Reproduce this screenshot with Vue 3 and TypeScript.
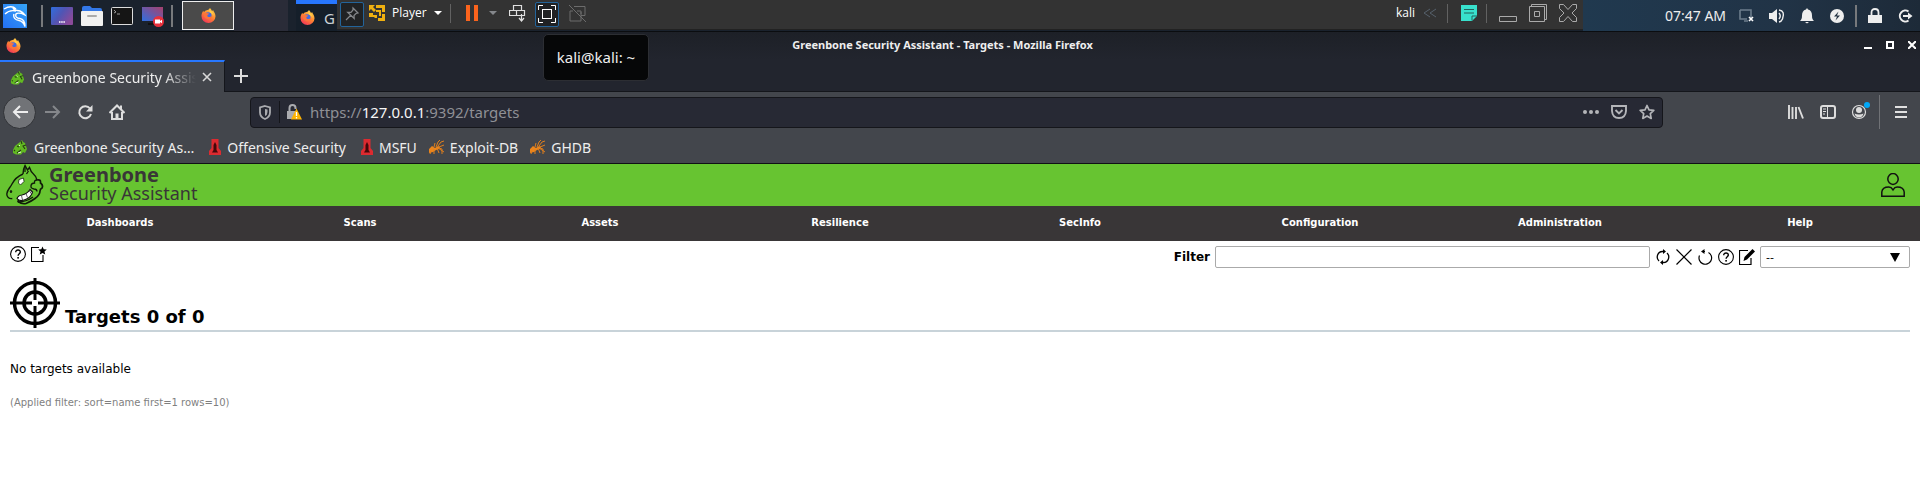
<script setup lang="ts">
import { ref } from 'vue'

const menus = ['Dashboards', 'Scans', 'Assets', 'Resilience', 'SecInfo', 'Configuration', 'Administration', 'Help']
const bookmarks = [
  { label: 'Greenbone Security As…', icon: 'dragon' },
  { label: 'Offensive Security', icon: 'rocket' },
  { label: 'MSFU', icon: 'rocket' },
  { label: 'Exploit-DB', icon: 'ant' },
  { label: 'GHDB', icon: 'ant' },
]
const filter = ref('')
</script>

<template>
  <div class="desktop">
    <svg class="defs" width="0" height="0" aria-hidden="true">
      <defs>
        <linearGradient id="wall" x1="0" y1="0" x2="1" y2="0.6"><stop offset="0" stop-color="#2f6fe0" /><stop offset=".5" stop-color="#5055b4" /><stop offset="1" stop-color="#8a4a9a" /></linearGradient>
        <linearGradient id="wall2" x1="0" y1="1" x2="1" y2="0"><stop offset="0" stop-color="#2f6fe0" /><stop offset="1" stop-color="#a8406c" /></linearGradient>
        <linearGradient id="flame" x1=".8" y1="0" x2=".2" y2="1"><stop offset="0" stop-color="#ffd84a" /><stop offset=".5" stop-color="#ff8430" /><stop offset="1" stop-color="#f0305c" /></linearGradient>
        <linearGradient id="kali" x1="0" y1="1" x2="1" y2="0"><stop offset="0" stop-color="#2470f4" /><stop offset="1" stop-color="#35a4f6" /></linearGradient>
      </defs>
      <symbol id="firefox" viewBox="0 0 16 16">
        <path d="M8 1.800C9 .8 9.300 .5 9.500 0c1.200 1 1.700 2 2 3 1-.1 1.400-1 1.400-1 .3 1.500 2.600 3.300 2.600 6.700A7.500 7.300 0 0 1 .5 8.600C.5 6 1.500 4 2.500 2.800l.6 1.600C4 3.300 5 2.700 6 2.500z" fill="url(#flame)" />
        <circle cx="7.700" cy="8" r="3.500" fill="#416be0" />
        <path d="M3.200 5.300c2-.6 3 .2 4 .2 1.400 0 1.600.8 1 1.200-1.700.7-1.900 1.700-.9 2.500 1.500 1 3 .2 4-1 .2 3-2.300 4.100-4.300 3.700C3.700 11.300 2.600 8 3.200 5.300z" fill="#fb743c" />
        <path d="M9 2c2.500 1.200 4.500 3 4.300 6.400C12.500 6 10.500 5.500 9.800 4.800 9 4 8.800 3 9 2z" fill="#ffcf48" />
      </symbol>
      <symbol id="dragon" viewBox="0 0 16 16">
        <path d="M8 3l2-2 1 2 2 1 1 3 1 3-2 4-2-1-2 2.500H4L1 14v-3l2-4z" fill="#62b922" />
        <path d="M9 2l1 3M14 6l-3 1 2 3M5 7l2 1M5 14l4-3M2 11l1 1" stroke="#263d13" stroke-width="1.100" fill="none" />
        <path d="M7 6l1 1M6 14l3-1" stroke="#e8f4df" stroke-width="1" />
      </symbol>
      <symbol id="rocket" viewBox="0 0 12 16">
        <path d="M2.500 0h7v9l2.500 3v4H0v-4l2.500-3z" fill="#dd2a30" /><path d="M6 3l1.500 3v5L9 13.500H3L4.500 11V6z" fill="#43080b" />
      </symbol>
      <symbol id="ant" viewBox="0 0 16 16">
        <path d="M0 10l3-3 3 2 3-2 2 1-1 2-3 1-3 2-4 1z" fill="#ec851c" />
        <path d="M2 12L1 15M5 10v5M8 9l2 5M9 9l6 4M5 8l1-4M7 8l2-5 2-2M9 7l3-4 3-1M10 8l5-2M10 9l3 1v5" stroke="#e07e1c" stroke-width="1" fill="none" />
      </symbol>
      <symbol id="help" viewBox="0 0 16 16">
        <circle cx="8" cy="8" r="7.400" fill="none" stroke="currentColor" stroke-width="1.100" /><path d="M5.700 6.300c0-3.200 4.800-2.900 4.600-.2-.1 1.700-2.200 1.700-2.200 3.700" fill="none" stroke="currentColor" stroke-width="1.400" /><rect x="7.300" y="11" width="1.600" height="1.600" fill="currentColor" />
      </symbol>
    </svg>

    <header class="panel">
      <div class="launchers">
        <button class="ic kali" aria-label="Applications">
          <svg width="24" height="24" viewBox="0 0 24 24"><rect width="24" height="24" fill="url(#kali)" /><path d="M1 5c5-3 9-3 12 0M2 10c3-3 7-4 11-3M10 4c1 3 4 2 7 3 2 1 4 2 5 4l-3-1.500c-3-.5-5-1-6 .5-1 3 1 4 4 4.500 3 .5 5 3 5 8-1-3-3-5.500-6-6-4-.6-6-3-5-6.500" fill="none" stroke="#fff" stroke-width="1.400" /></svg>
        </button>
        <i class="bar"></i>
        <button class="ic" aria-label="Show desktop"><svg width="22" height="22" viewBox="0 0 22 22"><rect y="2" width="22" height="18" rx="1" fill="url(#wall)" /><path d="M8 17h6" stroke="#fff" stroke-width="1.500" stroke-dasharray="1.500 .7" /></svg></button>
        <button class="ic" aria-label="Files"><svg width="22" height="22" viewBox="0 0 22 22"><path d="M1 9V3q0-2 2-2h6l2 2h8q2 0 2 2v4z" fill="#3378e8" /><rect y="6" width="22" height="15" rx="1" fill="#f1f1f1" /><path d="M7 11h8" stroke="#aaa" stroke-width="2" stroke-linecap="round" /></svg></button>
        <button class="ic" aria-label="Terminal"><svg width="22" height="22" viewBox="0 0 22 22"><rect x=".5" y="2.500" width="21" height="17" rx="1" fill="#151515" stroke="#ddd" /><path d="M3 5l2 2-2 1M6 9h3" fill="none" stroke="#999" /></svg></button>
        <button class="ic" aria-label="Recorder"><svg width="24" height="22" viewBox="0 0 24 22"><rect x="1" y="2" width="21" height="14" fill="url(#wall2)" /><path d="M7 19h7" stroke="#111" stroke-width="2" /><circle cx="17.500" cy="16.500" r="5.500" fill="#e8303c" /><path d="M14 14.500h5v4h-5zM19 16l2-1.300v3.600l-2-1.300z" fill="#fff" /></svg></button>
        <i class="bar"></i>
      </div>
      <button class="task" aria-label="Firefox window"><svg width="15" height="15"><use href="#firefox" /></svg></button>
      <div class="task-rest"></div>
      <button class="window-button"><svg width="15" height="15"><use href="#firefox" /></svg><span>G</span></button>

      <div class="vm">
        <button class="boxed" aria-label="Pin"><svg width="16" height="16" viewBox="0 0 16 16"><path d="M9 2l5 5-2 .5-2 2 .2 3-6.500-6.200 3.300 0L9 4zM7 9l-5 5" fill="none" stroke="#85888c" stroke-width="1.200" /></svg></button>
        <button class="player">
          <svg width="16" height="16" viewBox="0 0 16 16"><path d="M0 0h6L4 2l3 3-2 2-3-3-2 2zM7 0h9v7h-3V3H7zM0 8l4 0v2h4v3l-2 0-1-1H0zM9 13h4V9h3v7H9z" fill="#f0b010" /><path d="M7 6h4v5" stroke="#f0b010" stroke-width="2" fill="none" /></svg>
          <span>Player</span>
          <svg width="8" height="4" viewBox="0 0 8 4"><path d="M0 0h8L4 4z" fill="#fff" /></svg>
        </button>
        <i class="thin"></i>
        <button class="ic pause" aria-label="Pause"><svg width="12" height="16" viewBox="0 0 12 16"><path d="M0 0h4v16H0zM8 0h4v16H8z" fill="#fb641d" /></svg></button>
        <button class="ic more" aria-label="Power options"><svg width="8" height="4" viewBox="0 0 8 4"><path d="M0 0h8L4 4z" fill="#85888c" /></svg></button>
        <button class="ic keys" aria-label="Send keys"><svg width="17" height="17" viewBox="0 0 17 17"><path d="M4.500.5h8v5h-8zM.5 5.500h7v5h-7zM7.500 5.500h8v5h-8zM12.500 9v7M10 13l2.500 3 2.500-3" fill="none" stroke="#e0e0e0" stroke-width="1.200" /></svg></button>
        <button class="boxed" aria-label="Full screen"><svg width="18" height="18" viewBox="0 0 18 18"><path d="M.5 5V.5H5M13 .5h4.500V5M17.500 13v4.500H13M5 17.500H.5V13" fill="none" stroke="#fff" /><rect x="4.500" y="4.500" width="9" height="9" fill="none" stroke="#fff" /></svg></button>
        <button class="ic unity" aria-label="Unity"><svg width="17" height="17" viewBox="0 0 17 17"><path d="M5 1.500h11v9h-4M12 7v9H1V6h3M0 0l17 17M8 6h4v3" fill="none" stroke="#6c6c6c" /></svg></button>
        <div class="vm-end">
          <span>kali</span>
          <svg class="chev" width="14" height="10" viewBox="0 0 14 10"><path d="M7 1L1 5l6 4M13 1L7 5l6 4" fill="none" stroke="#56616c" /></svg>
          <i class="thin"></i>
          <button class="ic note" aria-label="Messages"><svg width="16" height="16" viewBox="0 0 16 16"><path d="M0 0h16v11l-5 5H0z" fill="#38e0cc" /><path d="M3 4.500h10M3 8h10M11 15.500V11h5" fill="none" stroke="#22605b" /></svg></button>
          <i class="thin"></i>
          <button class="ic wmin" aria-label="Minimize"><svg width="18" height="18" viewBox="0 0 18 18"><path d="M.5 12.500h17v5H.5z" fill="none" stroke="#aaa" /></svg></button>
          <button class="ic wmax" aria-label="Restore"><svg width="18" height="18" viewBox="0 0 18 18"><path d="M.5 2.500h15v15H.5zM2.500 2V.5h15v15H16M5.500 7.500h5v5h-5z" fill="none" stroke="#aaa" /></svg></button>
          <button class="ic wclose" aria-label="Close"><svg width="18" height="18" viewBox="0 0 18 18"><path d="M.5.5h4L9 5.500 13.500.500h4v4L13 9l4.500 4.500v4h-4L9 12.500l-4.500 5h-4v-4L5 9 .5 4.500z" fill="none" stroke="#aaa" /></svg></button>
        </div>
      </div>

      <div class="tray">
        <time>07:47 AM</time>
        <button class="ic t1" aria-label="Network"><svg width="15" height="15" viewBox="0 0 15 15"><path d="M1 2h11v8M1 2v9h7M5 13h4" fill="none" stroke="#6d7e8d" stroke-width="1.600" /><path d="M10 9l4 4M14 9l-4 4" stroke="#fff" stroke-width="1.600" /></svg></button>
        <button class="ic t2" aria-label="Volume"><svg width="16" height="16" viewBox="0 0 16 16"><path d="M0 5h3l5-4v14l-5-4H0z" fill="#eee" /><path d="M10 5q2.500 3 0 6M10 2q6.500 1 3.500 9-1 2.500-3.500 3" fill="none" stroke="#eee" stroke-width="1.400" /></svg></button>
        <button class="ic t3" aria-label="Notifications"><svg width="14" height="16" viewBox="0 0 14 16"><path d="M7 0l1 1.500c3 .7 4 3 4 6 0 3 .5 4 2 5.500H0c1.500-1.500 2-2.500 2-5.500 0-3 1-5.300 4-6zM5 14h4l-2 1.500z" fill="#eee" /></svg></button>
        <button class="ic t4" aria-label="Power"><svg width="14" height="14" viewBox="0 0 14 14"><circle cx="7" cy="7" r="7" fill="#eee" /><path d="M8.500 2.500L4 7.500h3l-1.500 4L10 6.500H7z" fill="#243443" /></svg></button>
        <i class="bar"></i>
        <button class="ic t5" aria-label="Lock"><svg width="14" height="15" viewBox="0 0 14 15"><path d="M3.500 8V4.500q0-3.500 3.500-3.500t3.500 3.500V8" fill="none" stroke="#eee" stroke-width="1.800" /><path d="M0 7h14v8H0z" fill="#eee" /></svg></button>
        <button class="ic t6" aria-label="Log out"><svg width="15" height="14" viewBox="0 0 15 14"><path d="M10.500 2.500A5.500 5.500 0 1 0 10.500 11.500" fill="none" stroke="#eee" stroke-width="2" /><path d="M5 6h5V3.500L14.500 7 10 10.500V8H5z" fill="#eee" /></svg></button>
      </div>
      <div class="tooltip" role="tooltip">kali@kali: ~</div>
    </header>

    <section class="titlebar">
      <svg width="15" height="15"><use href="#firefox" /></svg>
      <span class="win-title">Greenbone Security Assistant - Targets - Mozilla Firefox</span>
      <div class="win-buttons">
        <button class="ic" aria-label="Minimize window"><svg width="8" height="8"><path d="M0 6h8v2H0z" fill="#fff" /></svg></button>
        <button class="ic" aria-label="Maximize window"><svg width="8" height="8"><rect x="1" y="1" width="6" height="6" fill="none" stroke="#fff" stroke-width="2" /></svg></button>
        <button class="ic" aria-label="Close window"><svg width="8" height="8"><path d="M0 0l8 8M8 0L0 8" stroke="#fff" stroke-width="2" /></svg></button>
      </div>
    </section>

    <section class="tabs">
      <div class="tab">
        <svg width="15" height="15"><use href="#dragon" /></svg>
        <span class="tab-title">Greenbone Security Assistant</span>
        <button class="ic" aria-label="Close tab"><svg width="10" height="10" viewBox="0 0 10 10"><path d="M1 1l8 8M9 1L1 9" stroke="#d8d8d8" stroke-width="1.600" /></svg></button>
      </div>
      <button class="ic plus" aria-label="New tab"><svg width="14" height="14"><path d="M7 0v14M0 7h14" stroke="#dcdcdc" stroke-width="2" /></svg></button>
    </section>

    <nav class="toolbar">
      <button class="back" aria-label="Back"><svg width="16" height="14" viewBox="0 0 16 14"><path d="M16 7H2M8 1L2 7l6 6" fill="none" stroke="#eee" stroke-width="2" /></svg></button>
      <button class="ic fwd" aria-label="Forward"><svg width="16" height="14" viewBox="0 0 16 14"><path d="M0 7h14M8 1l6 6-6 6" fill="none" stroke="#85878b" stroke-width="2" /></svg></button>
      <button class="ic" aria-label="Reload"><svg width="16" height="16" viewBox="0 0 16 16"><path d="M13 4.500A6 6 0 1 0 14 10" fill="none" stroke="#ddd" stroke-width="2" /><path d="M15.500 1v6.500H9z" fill="#ddd" /></svg></button>
      <button class="ic" aria-label="Home"><svg width="16" height="16" viewBox="0 0 16 16"><path d="M.5 9L8 1.500 15.500 9M3 8v7h10V8M12 5V1.500" fill="none" stroke="#ddd" stroke-width="2" /><path d="M6.500 9.500h3V15h-3z" fill="#ddd" /></svg></button>
      <div class="urlbar">
        <svg width="12" height="15" viewBox="0 0 12 15"><path d="M6 1l5 1.500v5Q11 12 6 14 1 12 1 7.500v-5z" fill="none" stroke="#aaabaf" stroke-width="1.800" /><path d="M6 4v7Q8.500 10 8.500 7V4.500z" fill="#aaabaf" /></svg>
        <i></i>
        <svg width="15" height="16" viewBox="0 0 15 16"><path d="M2.500 8V4q0-3 3-3t3 3v1" fill="none" stroke="#aaabaf" stroke-width="2" /><path d="M0 7h9v8H0z" fill="#aaabaf" /><path d="M9.500 4.500L15 15.500H4z" fill="#ffb400" /><path d="M9.500 8v4M9.500 13v1.500" stroke="#fff" stroke-width="1.300" /></svg>
        <a class="url" href="#targets">https://<b>127.0.0.1</b>:9392/targets</a>
        <div class="url-actions">
          <button class="ic" aria-label="Page actions"><svg width="16" height="16"><g fill="#b4b5b9"><circle cx="2" cy="8" r="2" /><circle cx="8" cy="8" r="2" /><circle cx="14" cy="8" r="2" /></g></svg></button>
          <button class="ic" aria-label="Save to Pocket"><svg width="16" height="16" viewBox="0 0 16 16"><path d="M1 2h14v5q-.5 7-7 7T1 7zM4.500 6L8 9.500 11.500 6" fill="none" stroke="#b4b5b9" stroke-width="1.900" /></svg></button>
          <button class="ic" aria-label="Bookmark"><svg width="16" height="16" viewBox="0 0 16 16"><path d="M8 1.500l2 4.300 4.800.6-3.500 3.200.9 4.800L8 12l-4.200 2.400.9-4.800L1.200 6.400 6 5.800z" fill="none" stroke="#b4b5b9" stroke-width="1.700" stroke-linejoin="round" /></svg></button>
        </div>
      </div>
      <div class="tools">
        <button class="ic" aria-label="Library"><svg width="16" height="14" viewBox="0 0 16 14"><path d="M1 0v14M4.500 2v12M8 2v12M10.500 2l4.500 11.500" stroke="#ddd" stroke-width="1.900" /></svg></button>
        <button class="ic" aria-label="Sidebars"><svg width="16" height="14" viewBox="0 0 16 14"><rect x="1" y="1" width="14" height="12" rx="2" fill="none" stroke="#ddd" stroke-width="2" /><path d="M7.500 1v12M3 4h3M3 6.500h3M3 9h2" stroke="#ddd" /></svg></button>
        <button class="ic account" aria-label="Account"><svg width="20" height="20" viewBox="0 0 20 20"><circle cx="9" cy="10" r="6.500" fill="none" stroke="#ddd" stroke-width="1.200" /><circle cx="9" cy="8" r="3" fill="#ddd" /><path d="M4.500 11.500q2 1 4.500 1t4.500-1q-1 4-4.500 4t-4.500-4z" fill="#ddd" /><circle cx="17" cy="3" r="3" fill="#00a8f8" /></svg></button>
        <i></i>
        <button class="ic" aria-label="Menu"><svg width="12" height="12"><path d="M0 1h12M0 6h12M0 11h12" stroke="#e0e0e0" stroke-width="2" /></svg></button>
      </div>
    </nav>

    <nav class="bookmarks">
      <a v-for="b in bookmarks" :key="b.label" href="#" :class="b.icon">
        <svg :width="b.icon === 'rocket' ? 12 : 16" height="16"><use :href="'#' + b.icon" /></svg>
        <span>{{ b.label }}</span>
      </a>
    </nav>

    <section class="brand">
      <svg width="38" height="42" viewBox="0 0 38 42">
        <path d="M17 10Q17 5 19 1.500L21.500 6 23.500 3.500Q25 8 27 9.500 30 12 31 16M17 10C10 13 8 16 6 20 4 24 1 26 .8 30c0 3 2 5 5.500 4.500" fill="none" stroke="#101b09" stroke-width="1.400" />
        <path d="M31 16q4-1 3.500 3 3 2 1.500 5-2 1-2 3 0 4-5 7.500-4 3-9 5-4 1-8-2 0-2 2-4" fill="none" stroke="#101b09" stroke-width="1.700" />
        <path d="M31 16q-3 0-2.500 3-3 0-3.500 2.500-.5 3 3 3.500 3 0 3 2.500M19 2v6M22.500 7l-2 3M12 38q8 0 15-5" fill="none" stroke="#101b09" stroke-width="1.300" />
        <path d="M13 15.500l4.500-1.500.5 3.500-3.500 3.500-2-2z" fill="#fff" stroke="#17240f" stroke-width=".8" />
        <path d="M11 34.500q1-3 5-3.500 5-1 8-5.500l2.500 2.500q-1 5-7 7.500-6 2.500-8.500-1z" fill="#fff" stroke="#111" stroke-width="1.200" />
        <path d="M15.500 31.500l1 4.500M20 29.500l1.500 4M23.500 27l2 3" stroke="#333" stroke-width=".8" />
        <ellipse cx="5" cy="27.500" rx="1.200" ry="1.500" fill="#17240f" />
      </svg>
      <div class="wordmark"><strong>Greenbone</strong><span>Security Assistant</span></div>
      <button class="ic user" aria-label="User"><svg width="24" height="24" viewBox="0 0 24 24"><ellipse cx="12" cy="6" rx="5.200" ry="5.400" fill="none" stroke="#111" stroke-width="1.500" /><path d="M.8 23.200V19q.5-5 7-5 2.500 0 4.200 2.800Q13.700 14 16.200 14q6.500 0 7 5v4.200z" fill="none" stroke="#111" stroke-width="1.500" /></svg></button>
    </section>

    <nav class="menu"><a v-for="m in menus" :key="m" href="#">{{ m }}</a></nav>

    <main>
      <div class="actions">
        <div class="left-icons">
          <button class="ic" aria-label="Help: Targets"><svg width="16" height="16"><use href="#help" /></svg></button>
          <button class="ic" aria-label="New target"><svg width="16" height="16" viewBox="0 0 16 16"><path d="M8 1.500H.5v14h11.500V9" fill="none" stroke="#000" stroke-width="1.100" /><path d="M11.500.5l1.200 2.700 3.100.3-2.300 2 .7 3-2.700-1.600L8.800 8.500l.7-3-2.300-2 3.100-.3z" /></svg></button>
        </div>
        <form class="filter" @submit.prevent>
          <label for="filter">Filter</label>
          <input id="filter" v-model="filter" type="text">
          <div class="filter-icons">
            <button class="ic" aria-label="Update filter"><svg width="16" height="16" viewBox="0 0 16 16"><path d="M9 2.500H7.500A5.500 5.500 0 0 0 4 12M7 13.500h1.500A5.500 5.500 0 0 0 12 4" fill="none" stroke="#000" stroke-width="1.300" /><path d="M8 0l3 2.500L8 5zM8 11v5l-3-2.500z" /></svg></button>
            <button class="ic" aria-label="Remove filter"><svg width="16" height="16" viewBox="0 0 16 16"><path d="M.5.5l15 15M15.500.5l-15 15" stroke="#000" stroke-width="1.200" /></svg></button>
            <button class="ic" aria-label="Reset filter"><svg width="16" height="16" viewBox="0 0 16 16"><path d="M11.500 3.500A6.300 6.300 0 1 1 2.500 6.500M8 2.500H5" fill="none" stroke="#000" stroke-width="1.200" /><path d="M7.500 0v5L4 2.500z" /></svg></button>
            <button class="ic" aria-label="Help: Filter"><svg width="16" height="16"><use href="#help" /></svg></button>
            <button class="ic" aria-label="Edit filter"><svg width="16" height="16" viewBox="0 0 16 16"><path d="M9 1.500H.5v14H12V9" fill="none" stroke="#000" stroke-width="1.200" /><path d="M13.500 0L16 2.500 8 10.500l-3.500 1.500 1-4z" /></svg></button>
          </div>
          <div class="select-wrap">
            <select aria-label="Saved filter"><option>--</option></select>
            <svg width="10" height="9" viewBox="0 0 10 9" aria-hidden="true"><path d="M0 0h10L5 9z" /></svg>
          </div>
        </form>
      </div>
      <div class="heading">
        <svg width="50" height="50" viewBox="0 0 50 50"><g fill="none" stroke="#000"><circle cx="25" cy="25" r="20.500" stroke-width="3.500" /><circle cx="25" cy="25" r="11" stroke-width="3.500" /><path d="M25 0v22M25 28v22M0 25h22M28 25h22" stroke-width="3" /></g></svg>
        <h1>Targets 0 of 0</h1>
      </div>
      <p class="empty">No targets available</p>
      <p class="applied">(Applied filter: sort=name first=1 rows=10)</p>
    </main>
  </div>
</template>

<style>
body { margin: 0; background: #fff; }
</style>
<style scoped>
* { box-sizing: border-box; }
.desktop { font-family: "Noto Sans", "Open Sans", sans-serif; color: #eee; }
.defs { position: absolute; }
svg { display: block; flex: none; }
a { color: inherit; text-decoration: none; }
button { margin: 0; padding: 0; border: 0; background: none; color: inherit; font: inherit; flex: none; }
.ic { display: flex; align-items: center; justify-content: center; }

.panel { position: relative; display: flex; height: 32px; background: #1a222d; border-bottom: 1px solid #0b0d10; }
.launchers { display: flex; align-items: center; gap: 8px; width: 182px; padding-left: 3px; flex: none; }
.bar { width: 2px; height: 22px; background: #77797c; flex: none; }
.kali { margin-right: 6px; }
.launchers .bar:last-child { margin-left: -2px; }
.task { display: flex; align-items: center; justify-content: center; width: 52px; height: 29px; margin-top: 1px; border: 1px solid #eee; background: #4a4a4a; }
.task-rest { width: 54px; background: #2a2c38; flex: none; }
.window-button { display: flex; align-items: center; width: 41px; margin-left: 8px; padding-left: 4px; gap: 9px; border-top: 4px solid #2777ff; background: #151f2a; font-size: 15px; line-height: 20px; }
.window-button span { color: #ccd2d6; }
.vm { display: flex; align-items: center; flex: 1; height: 30px; padding-left: 3px; padding-bottom: 3px; background: #333; border-bottom: 1px solid #222; font: 12px/16px "Open Sans", sans-serif; color: #fff; }
.boxed { display: flex; align-items: center; justify-content: center; width: 24px; height: 25px; margin-top: 2px; border: 1px solid #23649a; border-radius: 2px; background: #202224; }
.player { display: flex; align-items: center; gap: 7px; margin-left: 5px; }
.thin { width: 1px; height: 19px; background: #626262; flex: none; }
.player + .thin { margin-left: 8px; }
.pause { margin-left: 15px; }
.more { margin-left: 11px; }
.keys { margin: 0 9px 0 12px; }
.unity { margin-left: 10px; }
.vm-end { display: flex; align-items: center; margin-left: auto; padding-right: 6px; }
.chev { margin: 0 10px 0 8px; }
.note { margin: 0 9px 0 13px; }
.wmin { margin-left: 12px; }
.wmax, .wclose { margin-left: 12px; }
.tray { display: flex; align-items: center; width: 337px; padding-left: 82px; flex: none; background: linear-gradient(90deg, #20394f, #213346 60%, #1d2a38); font-size: 14px; }
.tray time { width: 65px; white-space: nowrap; }
.t1 { margin-left: 9px; }
.t2 { margin-left: 15px; }
.t3 { margin-left: 15px; }
.t4 { margin-left: 16px; }
.tray .bar { margin-left: 11px; }
.t5 { margin-left: 11px; }
.t6 { margin-left: 16px; }
.tooltip { position: absolute; left: 543px; top: 34px; width: 106px; height: 47px; border: 1px solid #2c2e33; border-radius: 5px; background: #060708; color: #eee; font-size: 15px; line-height: 45px; text-align: center; z-index: 2; }

.titlebar { display: flex; align-items: center; height: 28px; padding: 0 4px 2px 6px; background: linear-gradient(#1d2027, #22252e); }
.win-title { flex: 1; text-align: center; font-size: 11px; line-height: 16px; font-weight: 700; }
.win-buttons { display: flex; gap: 14px; }

.tabs { display: flex; height: 32px; background: #22252e; border-bottom: 1px solid #14161b; }
.tab { display: flex; align-items: center; width: 225px; height: 32px; padding: 0 12px 0 10px; border-top: 2px solid #2777ff; border-right: 1px solid #14161b; background: #43464c; font-size: 14px; flex: none; }
.tab-title { flex: 1; margin: 0 6px 0 7px; overflow: hidden; white-space: nowrap; mask-image: linear-gradient(90deg, #000 80%, transparent); }
.plus { margin-left: 9px; }

.toolbar { display: flex; align-items: center; gap: 16px; height: 41px; padding: 0 13px 1px 3px; background: #43464c; }
.back { display: flex; align-items: center; justify-content: center; width: 33px; height: 33px; border: 1px solid #303236; border-radius: 50%; background: #717377; }
.fwd { margin-left: -7px; }
.urlbar { display: flex; align-items: center; flex: 1; height: 31px; margin: 0 109px 0 109px; padding: 0 7px 0 8px; border: 1px solid #15161b; border-radius: 4px; background: #272934; font-size: 15px; }
.urlbar > i { width: 1px; height: 22px; margin: 0 7px 0 8px; background: #14151a; }
.url { margin-left: 8px; color: #8f9096; white-space: nowrap; }
.url b { color: #f6f6f6; font-weight: 400; }
.url-actions { display: flex; gap: 12px; margin-left: auto; }
.tools { display: flex; align-items: center; gap: 16px; }
.tools i { width: 1px; height: 34px; margin-right: -1px; background: #707276; }
.account { margin: 0 -7px 0 -2px; }

.bookmarks { display: flex; align-items: center; height: 31px; padding: 0 0 2px 12px; gap: 15px; background: #43464c; border-bottom: 1px solid #101114; font-size: 14px; white-space: nowrap; }
.bookmarks a { display: flex; align-items: center; gap: 6px; }
.bookmarks .ant { gap: 5px; margin-left: -3px; }

.brand { display: flex; align-items: center; height: 42px; padding: 0 15px 0 6px; background: #67c431; color: #393637; }
.wordmark { display: flex; flex-direction: column; margin-left: 5px; padding-bottom: 2px; font-size: 18px; line-height: 19px; }
.wordmark strong { font-size: 20px; }
.user { margin-left: auto; color: #111; }

.menu { display: grid; grid-template-columns: repeat(8, 1fr); height: 35px; background: #393637; color: #fff; font: bold 10px/34px "DejaVu Sans", sans-serif; text-align: center; }

main { padding: 5px 10px; color: #000; font-family: "DejaVu Sans", sans-serif; font-size: 12px; }
.actions { display: flex; justify-content: space-between; align-items: flex-start; }
.left-icons { display: flex; gap: 5px; }
.filter { display: flex; align-items: center; }
.filter label { font-weight: 700; margin-right: 5px; }
.filter input { width: 435px; height: 22px; padding: 0 8px; border: 1px solid #aaa; border-radius: 2px; background: #fff; font: inherit; }
.filter-icons { display: flex; gap: 5px; margin: 0 5px; }
.select-wrap { display: grid; align-items: center; }
.select-wrap > * { grid-area: 1 / 1; }
select { width: 150px; height: 22px; padding: 0 5px; border: 1px solid #aaa; border-radius: 2px; background: #fff; color: #000; font: 11px "DejaVu Sans", sans-serif; appearance: none; }
.select-wrap svg { justify-self: end; margin-right: 10px; pointer-events: none; }
.heading { display: flex; align-items: flex-end; gap: 5px; margin-top: 10px; padding-bottom: 2px; border-bottom: 2px solid #c8d3d9; }
h1 { margin: 0; font-size: 18px; line-height: 22px; }
p { margin: 0; }
.empty { margin-top: 29px; line-height: 16px; }
.applied { margin-top: 18px; font-size: 10px; line-height: 16px; color: #7f7f7f; }
</style>
